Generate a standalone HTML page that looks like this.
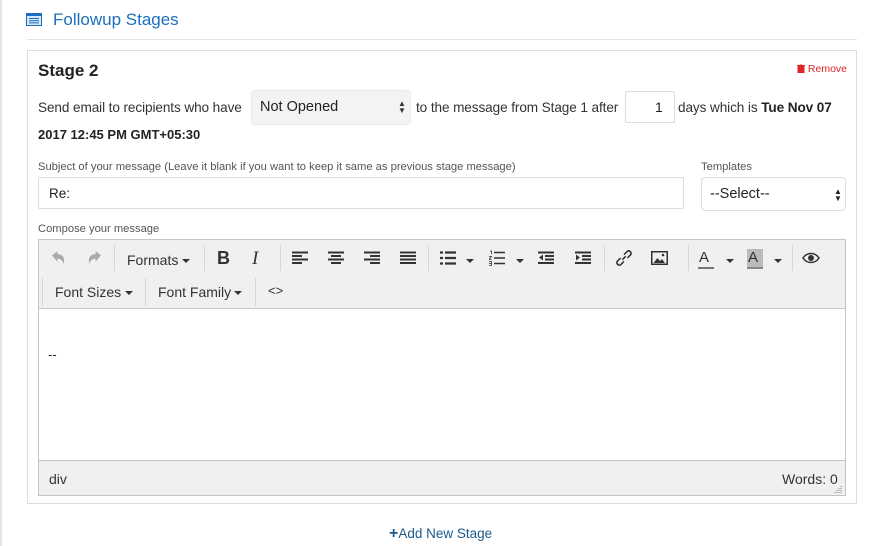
<!DOCTYPE html>
<html><head><meta charset="utf-8"><style>
*{box-sizing:border-box;margin:0;padding:0}
body{width:882px;height:546px;background:#fff;font-family:"Liberation Sans",sans-serif;position:relative;overflow:hidden;color:#333}
.a{position:absolute;white-space:nowrap}
.lbl{font-size:11.2px;color:#555}
.sep{position:absolute;width:1px;background:#d6d6d6}
.ic{position:absolute}
.car{position:absolute;width:0;height:0;border-left:4px solid transparent;border-right:4px solid transparent;border-top:4px solid #333}
.tb{font-size:14px;color:#333}
</style></head><body>
<div class="a" style="left:0;top:0;width:2px;height:546px;background:#e6e6e6"></div>
<svg class="ic" style="left:26px;top:13px" width="16" height="13" viewBox="0 0 16 13"><rect x="0.5" y="0.5" width="15" height="12" fill="#d7e6f5" stroke="#1a6fbd"/><rect x="0" y="0" width="16" height="3" fill="#1a6fbd"/><path d="M3 5.5h10M3 7.7h10M3 9.9h10" stroke="#1a6fbd" stroke-width="1"/></svg>
<div class="a" style="left:53px;top:10px;font-size:17px;color:#1a6fbd">Followup Stages</div>
<div class="a" style="left:27px;top:39px;width:830px;height:1px;background:#e3e3e3"></div>
<div class="a" style="left:27px;top:50px;width:830px;height:454px;border:1px solid #ddd"></div>
<div class="a" style="left:38px;top:61px;font-size:17px;font-weight:bold;color:#222">Stage 2</div>
<div class="a" style="left:797px;top:63px;font-size:10.5px;color:#e0242a"><svg width="8" height="9" viewBox="0 0 8 9" style="vertical-align:-1px"><path d="M0 1.5h8M3 0h2M1 2.5h6v6.5h-6z" stroke="#e0242a" fill="#e0242a" stroke-width="1"/></svg> Remove</div>
<div class="a" style="left:38px;top:100px;font-size:13.6px;letter-spacing:-0.1px;color:#333">Send email to recipients who have</div>
<div class="a" style="left:251px;top:90px;width:160px;height:35px;background:#f2f3f5;border-radius:4px;border:1px solid #eaeaea"></div>
<div class="a" style="left:260px;top:99px;font-size:14.5px;color:#222">Not Opened</div>
<div class="a" style="left:398px;top:100px;font-size:8px;line-height:7px;color:#333">▲<br>▼</div>
<div class="a" style="left:416px;top:100px;font-size:13.6px;letter-spacing:-0.1px;color:#333">to the message from Stage 1 after</div>
<div class="a" style="left:625px;top:91px;width:50px;height:32px;border:1px solid #ddd;border-radius:2px"></div>
<div class="a" style="left:655px;top:99px;font-size:14px;color:#222">1</div>
<div class="a" style="left:678px;top:100px;font-size:13.6px;letter-spacing:-0.1px;color:#333">days which is <b style="color:#222">Tue Nov 07</b></div>
<div class="a" style="left:38px;top:127px;font-size:13px;font-weight:bold;color:#222">2017 12:45 PM GMT+05:30</div>
<div class="a lbl" style="left:38px;top:161px">Subject of your message (Leave it blank if you want to keep it same as previous stage message)</div>
<div class="a" style="left:38px;top:177px;width:646px;height:32px;border:1px solid #ddd;border-radius:2px"></div>
<div class="a" style="left:49px;top:186px;font-size:13.5px;color:#222">Re:</div>
<div class="a lbl" style="left:701px;top:161px">Templates</div>
<div class="a" style="left:701px;top:177px;width:145px;height:34px;border:1px solid #ddd;border-radius:4px"></div>
<div class="a" style="left:710px;top:186px;font-size:14.5px;color:#222">--Select--</div>
<div class="a" style="left:834px;top:188px;font-size:8px;line-height:7px;color:#222">▲<br>▼</div>
<div class="a lbl" style="left:38px;top:223px">Compose your message</div>
<div class="a" style="left:38px;top:239px;width:808px;height:257px;border:1px solid #c5c5c5;background:#fff"></div>
<div class="a" style="left:39px;top:240px;width:806px;height:69px;background:#f0f0f0;border-bottom:1px solid #c5c5c5"></div>
<div class="a" style="left:39px;top:460px;width:806px;height:35px;background:#f0f0f0;border-top:1px solid #c5c5c5"></div>
<div class="a" style="left:48px;top:347px;font-size:13px;color:#222">--</div>
<div class="a" style="left:49px;top:471px;font-size:14px;color:#333">div</div>
<div class="a" style="left:782px;top:471px;font-size:14px;color:#333">Words: 0</div>
<svg class="ic" style="left:833px;top:484px" width="10" height="10"><path d="M8 2v1M6 4v1M8 4v1M4 6v1M6 6v1M8 6v1M2 8v1M4 8v1M6 8v1M8 8v1" stroke="#888"/></svg>
<svg class="ic" style="left:51px;top:250px" width="15" height="15" viewBox="0 0 14 14"><path d="M1 5l5-4v3c5 0 7 3 6 9-1-3-3-5-6-5v3z" fill="#aaa"/></svg>
<svg class="ic" style="left:87px;top:250px" width="15" height="15" viewBox="0 0 14 14"><path d="M13 5l-5-4v3c-5 0-7 3-6 9 1-3 3-5 6-5v3z" fill="#aaa"/></svg>
<div class="sep" style="left:114px;top:245px;height:26px"></div>
<div class="a tb" style="left:127px;top:252px">Formats</div><div class="car" style="left:182px;top:259px"></div>
<div class="sep" style="left:204px;top:245px;height:26px"></div>
<div class="a" style="left:217px;top:248px;font-size:18px;font-weight:bold;color:#333">B</div>
<div class="a" style="left:252px;top:248px;font-size:19px;font-style:italic;font-family:'Liberation Serif',serif;color:#333">I</div>
<div class="sep" style="left:280px;top:245px;height:26px"></div>
<svg class="ic" style="left:292px;top:251px" width="16" height="14"><path d="M0 1.5h16M0 5h10M0 8.5h16M0 12h10" stroke="#333" stroke-width="2"/></svg>
<svg class="ic" style="left:328px;top:251px" width="16" height="14"><path d="M0 1.5h16M3 5h10M0 8.5h16M3 12h10" stroke="#333" stroke-width="2"/></svg>
<svg class="ic" style="left:364px;top:251px" width="16" height="14"><path d="M0 1.5h16M6 5h10M0 8.5h16M6 12h10" stroke="#333" stroke-width="2"/></svg>
<svg class="ic" style="left:400px;top:251px" width="16" height="14"><path d="M0 1.5h16M0 5h16M0 8.5h16M0 12h16" stroke="#333" stroke-width="2"/></svg>
<div class="sep" style="left:428px;top:245px;height:26px"></div>
<svg class="ic" style="left:440px;top:251px" width="16" height="14"><path d="M5 1.5h11M5 7h11M5 12.5h11M0 1.5h3M0 7h3M0 12.5h3" stroke="#333" stroke-width="2.2"/></svg><div class="car" style="left:466px;top:259px"></div>
<svg class="ic" style="left:489px;top:250px" width="16" height="16"><path d="M5 2.5h11M5 8h11M5 13.5h11" stroke="#333" stroke-width="1.6"/><path d="M1 1h1.5v3M0 6.5h2.5l-2.5 3h2.5M0 11.5h2.5v4h-2.5M0 13.5h2.5" stroke="#333" stroke-width=".8" fill="none"/></svg><div class="car" style="left:516px;top:259px"></div>
<svg class="ic" style="left:538px;top:251px" width="16" height="14"><path d="M0 1.5h16M7 5h9M7 8.5h9M0 12h16" stroke="#333" stroke-width="2"/><path d="M5 3.5v6l-4-3z" fill="#333"/></svg>
<svg class="ic" style="left:575px;top:251px" width="16" height="14"><path d="M0 1.5h16M7 5h9M7 8.5h9M0 12h16" stroke="#333" stroke-width="2"/><path d="M1 3.5v6l4-3z" fill="#333"/></svg>
<div class="sep" style="left:604px;top:245px;height:26px"></div>
<svg class="ic" style="left:615px;top:249px" width="18" height="18" viewBox="0 0 16 16"><path d="M6.5 9.5l3-3M5 8l-3 3a2.2 2.2 0 0 0 3 3l3-3M11 8l3-3a2.2 2.2 0 0 0-3-3l-3 3" stroke="#333" stroke-width="1.4" fill="none"/></svg>
<svg class="ic" style="left:651px;top:251px" width="17" height="14"><rect x=".75" y=".75" width="15.5" height="12.5" fill="none" stroke="#333" stroke-width="1.5"/><path d="M2.5 12l4-5 2.5 3 2-2 3 4z" fill="#333"/><circle cx="12" cy="4" r="1.3" fill="#333"/></svg>
<div class="sep" style="left:688px;top:245px;height:26px"></div>
<div class="a" style="left:699px;top:249px;font-size:15px;color:#333">A</div><div class="a" style="left:698px;top:267px;width:16px;height:2px;background:#777"></div><div class="car" style="left:726px;top:259px"></div>
<div class="a" style="left:747px;top:249px;width:16px;height:19px;background:#bbb"></div>
<div class="a" style="left:748px;top:249px;font-size:15px;color:#333">A</div><div class="a" style="left:747px;top:267px;width:16px;height:2px;background:#888"></div><div class="car" style="left:774px;top:259px"></div>
<div class="sep" style="left:792px;top:245px;height:26px"></div>
<svg class="ic" style="left:802px;top:252px" width="18" height="12" viewBox="0 0 18 12"><path d="M1 6c4-6 12-6 16 0c-4 6-12 6-16 0z" fill="none" stroke="#333" stroke-width="1.5"/><circle cx="9" cy="6" r="3" fill="#333"/></svg>
<div class="sep" style="left:42px;top:278px;height:28px"></div>
<div class="a tb" style="left:55px;top:284px">Font Sizes</div><div class="car" style="left:125px;top:291px"></div>
<div class="sep" style="left:145px;top:278px;height:28px"></div>
<div class="a tb" style="left:158px;top:284px">Font Family</div><div class="car" style="left:234px;top:291px"></div>
<div class="sep" style="left:255px;top:278px;height:28px"></div>
<div class="a" style="left:268px;top:283px;font-size:13px;color:#333">&lt;&gt;</div>
<div class="a" style="left:389px;top:525px;font-size:13.5px;color:#1a5a8c"><b style="font-size:16px">+</b>Add New Stage</div>
</body></html>
